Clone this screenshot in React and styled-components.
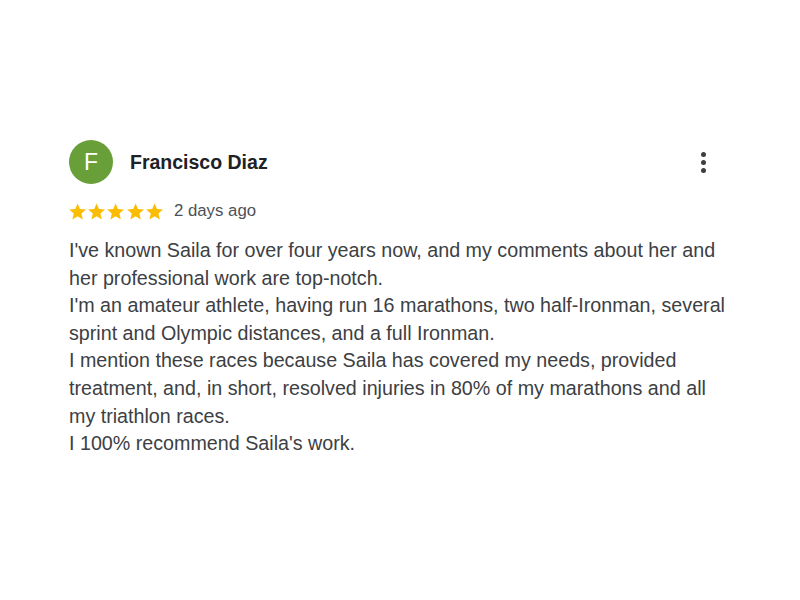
import styled, {createGlobalStyle} from 'styled-components';

const GlobalStyle = createGlobalStyle`
	body {
		margin: 0;
		background: #fff;
		font-family: "Liberation Sans", Arial, sans-serif;
	}
`;

const Page = styled.main`
	width: 800px;
	height: 600px;
	box-sizing: border-box;
	padding: 140px 0 0 69px;
`;

const Review = styled.article`
	width: 660px;
`;

const Header = styled.header`
	display: flex;
	align-items: center;
	gap: 17px;
`;

const Avatar = styled.div`
	width: 44px;
	height: 44px;
	border-radius: 50%;
	background: #689f38;
	color: #fff;
	font-size: 23px;
	display: flex;
	align-items: center;
	justify-content: center;
`;

const Name = styled.h2`
	flex: 1;
	margin: 0;
	font-size: 19.5px;
	font-weight: 700;
	color: #202124;
`;

const MenuButton = styled.button`
	border: 0;
	background: none;
	padding: 0;
	width: 24px;
	height: 24px;
	margin-right: 14px;
	display: flex;
	flex-direction: column;
	align-items: center;
	justify-content: center;
	gap: 3px;
`;

const Dot = styled.span`
	width: 5px;
	height: 5px;
	border-radius: 50%;
	background: #3c4043;
`;

const Meta = styled.div`
	display: flex;
	align-items: center;
	gap: 10px;
	margin-top: 17px;
`;

const Stars = styled.div`
	display: flex;
	margin-left: -1px;
`;

const When = styled.span`
	font-size: 16.8px;
	color: #4d5156;
`;

const Body = styled.p`
	margin: 16px 0 0;
	font-size: 19.7px;
	line-height: 27.6px;
	color: #3c4043;
`;

const Star = () => (
	<svg width="19.2" height="19" viewBox="0 0 24 24">
		<path fill="#fbbc04" d="M12 1.8l3 7.1 7.6.6-5.8 5 1.8 7.5L12 18l-6.6 4 1.8-7.5-5.8-5 7.6-.6z"/>
	</svg>
);

const lines = [
	"I've known Saila for over four years now, and my comments about her and her professional work are top-notch.",
	"I'm an amateur athlete, having run 16 marathons, two half-Ironman, several sprint and Olympic distances, and a full Ironman.",
	"I mention these races because Saila has covered my needs, provided treatment, and, in short, resolved injuries in 80% of my marathons and all my triathlon races.",
	"I 100% recommend Saila's work.",
];

const App = () => (
	<>
		<GlobalStyle />
		<Page>
			<Review>
				<Header>
					<Avatar>F</Avatar>
					<Name>Francisco Diaz</Name>
					<MenuButton aria-label="More">
						<Dot /><Dot /><Dot />
					</MenuButton>
				</Header>
				<Meta>
					<Stars>
						{[0, 1, 2, 3, 4].map(i => <Star key={i} />)}
					</Stars>
					<When>2 days ago</When>
				</Meta>
				<Body>
					{lines.map((line, i) => (
						<span key={i}>{line}{i < lines.length - 1 && <br />}</span>
					))}
				</Body>
			</Review>
		</Page>
	</>
);

export default App;
